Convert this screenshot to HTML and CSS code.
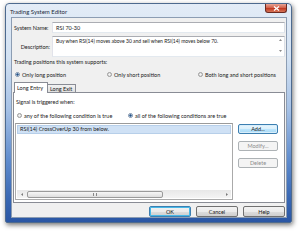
FILE: index.html
```html
<!DOCTYPE html>
<html>
<head>
<meta charset="utf-8">
<title>Trading System Editor</title>
<link rel="stylesheet" href="styles.css">
</head>
<body>
<div class="window">
  <div class="titlebar">
    <span class="title">Trading System Editor</span>
    <span class="close"><svg width="7" height="5" viewBox="0 0 7 5"><path d="M1 0.5 L6 4.5 M6 0.5 L1 4.5" stroke="#fff" stroke-width="1.3"/></svg></span>
  </div>
  <div class="client">
    <div class="row name-row">
      <span class="lbl">System Name:</span>
      <div class="textbox">RSI 70-30</div>
    </div>
    <div class="row desc-row">
      <span class="lbl right">Description:</span>
      <div class="textbox area">
        <span class="area-text">Buy when RSI(14) moves above 30 and sell when RSI(14) moves below 70.</span>
        <div class="vscroll">
          <svg width="3" height="2" viewBox="0 0 3 2"><path d="M0 2 L1.5 0 L3 2 Z" fill="#8a8a8a"/></svg>
          <svg width="3" height="2" viewBox="0 0 3 2"><path d="M0 0 L1.5 2 L3 0 Z" fill="#8a8a8a"/></svg>
        </div>
      </div>
    </div>
    <div class="group-label">Trading positions this system supports:</div>
    <div class="radios top-radios">
      <span class="radio on r1"><i></i>Only long position</span>
      <span class="radio r2"><i></i>Only short position</span>
      <span class="radio r3"><i></i>Both long and short positions</span>
    </div>
    <div class="tabs">
      <span class="tab active">Long Entry</span>
      <span class="tab">Long Exit</span>
    </div>
    <div class="panel">
      <div class="signal-label">Signal is triggered when:</div>
      <div class="radios panel-radios">
        <span class="radio p1"><i></i>any of the following condition is true</span>
        <span class="radio on"><i></i>all of the following conditions are true</span>
      </div>
      <div class="main-row">
        <div class="listbox">
          <div class="items">
            <div class="item selected">RSI(14) CrossOverUp 30 from below.</div>
          </div>
          <div class="hscroll">
            <span class="arrow"><svg width="2" height="3" viewBox="0 0 2 3"><path d="M2 0 L0 1.5 L2 3 Z" fill="#7a7a7a"/></svg></span>
            <span class="track"><span class="thumb"><span class="grip"></span></span></span>
            <span class="arrow"><svg width="2" height="3" viewBox="0 0 2 3"><path d="M0 0 L2 1.5 L0 3 Z" fill="#7a7a7a"/></svg></span>
          </div>
        </div>
        <div class="side-buttons">
          <span class="btn focus">Add...</span>
          <span class="btn disabled">Modify...</span>
          <span class="btn disabled">Delete</span>
        </div>
      </div>
    </div>
    <div class="footer">
      <span class="btn default">OK</span>
      <span class="btn">Cancel</span>
      <span class="btn">Help</span>
    </div>
  </div>
</div>
</body>
</html>
```
FILE: styles.css
```css
* { box-sizing: border-box; }
html, body { margin: 0; padding: 0; background: #ffffff; }
body {
  width: 300px;
  height: 233px;
  overflow: hidden;
  font-family: Lato, "Noto Sans", sans-serif;
  font-size: 5.5px;
  color: #1a1a1a;
}
.window {
  margin: 3px 0 0 5px;
  width: 287px;
  height: 220px;
  border: 1px solid #4d6a8f;
  border-radius: 4px 4px 2px 2px;
  background: linear-gradient(180deg, #e3ecf7 0%, #d2e1f2 25%, #a7c2e6 48%, #5e8bcd 72%, #3766b2 90%, #2a56a4 100%);
  box-shadow: 1px 2px 5px rgba(0,0,0,0.55);
  display: flex;
  flex-direction: column;
}
.titlebar {
  height: 13px;
  display: flex;
  align-items: flex-start;
  padding-left: 4px;
}
.title {
  margin-top: 4px;
  line-height: 7px;
  font-size: 6px;
  color: #1e2a3a;
}
.close {
  margin-left: auto;
  margin-right: 4px;
  width: 22px;
  height: 9px;
  border: 1px solid #6b2a22;
  border-top: none;
  border-radius: 0 0 3px 3px;
  background: linear-gradient(180deg, #e8a495 0%, #d4644e 45%, #c23a22 55%, #d6765a 100%);
  display: flex;
  align-items: center;
  justify-content: center;
}
.client {
  margin: 0 4px 4px 5px;
  flex: 1;
  background: #f0f0f0;
  border: 1px solid #8c9db3;
  padding: 3px 1px 0 1px;
  display: flex;
  flex-direction: column;
}
.row { display: flex; }
.lbl {
  width: 39px;
  flex: none;
  padding-left: 1px;
  display: flex;
  align-items: center;
}
.lbl.right { justify-content: flex-end; padding-right: 2px; }
.textbox {
  flex: 1;
  background: #fff;
  border: 1px solid #abadb3;
  border-right-color: #dbdfe6;
  border-bottom-color: #e3e9ef;
  border-left-color: #e2e3ea;
  padding-left: 3px;
  display: flex;
  align-items: center;
}
.name-row { height: 11px; margin-top: 1px; }
.desc-row { height: 21px; margin-top: 3px; }
.area { align-items: flex-start; padding-top: 1px; }
.area-text { flex: 1; line-height: 7px; font-size: 5px; }
.vscroll {
  width: 7px;
  height: 100%;
  display: flex;
  flex-direction: column;
  justify-content: space-between;
  align-items: center;
  padding: 2px 0 3px;
  margin-top: -1px;
}
.group-label { margin-top: 2px; line-height: 7px; padding-left: 1px; }
.radios { display: flex; align-items: center; height: 7px; }
.top-radios { margin-top: 5px; padding-left: 2px; }
.radio { display: flex; align-items: center; white-space: nowrap; }
.radio i {
  width: 5px;
  height: 5px;
  border-radius: 50%;
  border: 1px solid #9a9a9a;
  background: radial-gradient(circle, #f4f4f4 0%, #dcdcdc 100%);
  margin-right: 2px;
  flex: none;
}
.radio.on i {
  background: radial-gradient(circle, #2b4f7a 0%, #3c6a9e 45%, #d9e6f2 60%, #eef2f6 100%);
  border-color: #7a8ea8;
}
.r1 { width: 92px; }
.r2 { width: 91px; }
.tabs { display: flex; align-items: flex-end; height: 10px; margin-top: 4px; padding-left: 1px; }
.tab {
  height: 8px;
  padding: 0 2px;
  border: 1px solid #898c95;
  border-bottom: none;
  background: linear-gradient(180deg, #f2f2f2, #e0e0e0);
  display: flex;
  align-items: center;
  margin-left: -1px;
}
.tab.active {
  width: 34px;
  background: #fff;
  margin-left: 0;
  position: relative;
  z-index: 1;
  margin-bottom: -1px;
  height: 11px;
}
.tab:not(.active) { width: 29px; }
.panel {
  height: 111px;
  background: #fff;
  border: 1px solid #898c95;
  padding: 0 1px;
  display: flex;
  flex-direction: column;
}
.signal-label { margin-top: 6px; line-height: 7px; padding-left: 1px; }
.panel-radios { margin-top: 6px; padding-left: 2px; }
.p1 { width: 111px; }
.main-row { display: flex; margin-top: 4px; gap: 5px; }
.listbox {
  width: 218px;
  height: 77px;
  border: 1px solid #aaaaaa;
  border-top-color: #9a9a9a;
  background: #fff;
  display: flex;
  flex-direction: column;
  padding: 1px;
}
.items { flex: 1; }
.item { height: 9px; line-height: 9px; padding-left: 2px; }
.item.selected { background: #cfe1f5; border: 1px solid #b7cfe9; line-height: 7px; }
.hscroll {
  height: 8px;
  display: flex;
  align-items: center;
  background: linear-gradient(180deg, #e8e8e8, #f4f4f4);
}
.arrow { width: 9px; height: 8px; display: flex; align-items: center; justify-content: center; flex: none; }
.track { flex: 1; height: 8px; display: flex; align-items: center; }
.thumb {
  width: 136px;
  height: 7px;
  margin-left: 1px;
  border: 1px solid #9a9a9a;
  border-radius: 2px;
  background: linear-gradient(180deg, #f6f6f6, #dedede);
  display: flex;
  align-items: center;
  justify-content: center;
}
.grip { width: 4px; height: 3px; border-left: 1px solid #888; border-right: 1px solid #888; }
.side-buttons { display: flex; flex-direction: column; gap: 7px; padding-top: 1px; }
.btn {
  width: 40px;
  height: 10px;
  border: 1px solid #707070;
  border-radius: 2px;
  background: linear-gradient(180deg, #f2f2f2 0%, #ebebeb 50%, #dddddd 51%, #cfcfcf 100%);
  display: flex;
  align-items: center;
  justify-content: center;
}
.btn.focus {
  border-color: #3c7fb1;
  background: linear-gradient(180deg, #eaf6fd 0%, #d9f0fc 50%, #bee6fd 51%, #a7d9f5 100%);
  box-shadow: inset 0 0 0 1px #d8eefb;
}
.btn.default { border-color: #3c7fb1; box-shadow: inset 0 0 0 1px #48b9e8; }
.btn.disabled { border-color: #adb2b5; background: #f4f4f4; color: #8d8d8d; }
.footer { display: flex; justify-content: flex-end; gap: 5px; margin-top: 3px; }
.footer .btn { width: 42px; height: 11px; }
```
